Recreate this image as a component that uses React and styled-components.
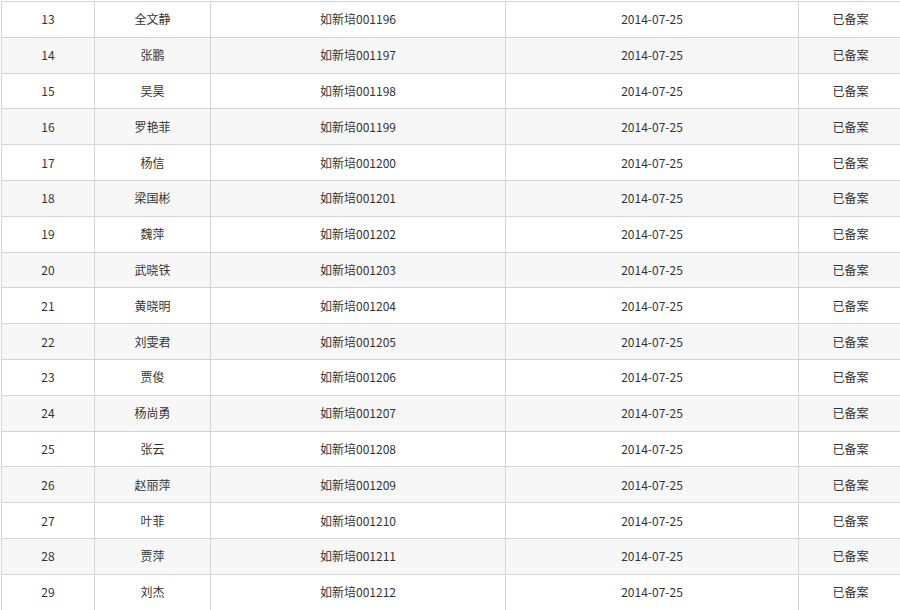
import React from "react";
import styled, { createGlobalStyle } from "styled-components";

const GlobalStyle = createGlobalStyle`
  html, body {
    margin: 0;
    padding: 0;
    background: #fff;
  }
  body {
    font-family: "Noto Sans CJK SC", "Liberation Sans", sans-serif;
    font-size: 12px;
    color: #333;
  }
`;

const Page = styled.div`
  width: 900px;
  height: 610px;
  overflow: hidden;
  padding: 1px 0 0 1px;
  box-sizing: border-box;
`;

const Table = styled.div`
  width: 902px;
  border-top: 1px solid #d4d4d4;
  border-left: 1px solid #d4d4d4;
`;

const Row = styled.div`
  display: grid;
  grid-template-columns: 93px 116px 295px 293px 104px;
  height: 35.8px;
  background: ${props => (props.striped ? "#f7f7f7" : "#fff")};
`;

const Cell = styled.div`
  display: flex;
  align-items: center;
  justify-content: center;
  box-sizing: border-box;
  border-right: 1px solid #d4d4d4;
  border-bottom: 1px solid #d4d4d4;
  line-height: 16px;
  white-space: nowrap;
`;

const records = [
  [13, "全文静", "001196"],
  [14, "张鹏", "001197"],
  [15, "吴昊", "001198"],
  [16, "罗艳菲", "001199"],
  [17, "杨信", "001200"],
  [18, "梁国彬", "001201"],
  [19, "魏萍", "001202"],
  [20, "武晓铁", "001203"],
  [21, "黄晓明", "001204"],
  [22, "刘雯君", "001205"],
  [23, "贾俊", "001206"],
  [24, "杨尚勇", "001207"],
  [25, "张云", "001208"],
  [26, "赵丽萍", "001209"],
  [27, "叶菲", "001210"],
  [28, "贾萍", "001211"],
  [29, "刘杰", "001212"]
];

const App = () => (
  <>
    <GlobalStyle />
    <Page>
      <Table>
        {records.map(([no, name, code]) => (
          <Row key={no} striped={no % 2 === 0}>
            <Cell>{no}</Cell>
            <Cell>{name}</Cell>
            <Cell>如新培{code}</Cell>
            <Cell>2014-07-25</Cell>
            <Cell>已备案</Cell>
          </Row>
        ))}
      </Table>
    </Page>
  </>
);

export default App;
